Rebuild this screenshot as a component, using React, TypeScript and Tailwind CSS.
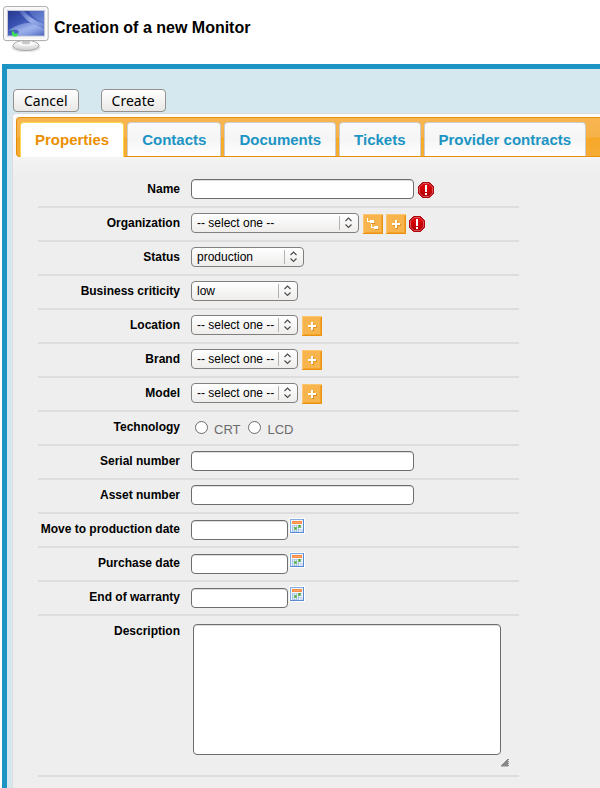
import React, { useState } from 'react';

const MonitorIcon: React.FC = () => (
  <svg className="w-12 h-12" viewBox="0 0 48 48" aria-hidden="true">
    <defs>
      <linearGradient id="screen" x1="0" y1="0" x2="1" y2="1">
        <stop offset="0" stopColor="#26388c" />
        <stop offset="0.35" stopColor="#3850b0" />
        <stop offset="0.7" stopColor="#5f7cd0" />
        <stop offset="1" stopColor="#3c55b0" />
      </linearGradient>
      <linearGradient id="beam" x1="0" y1="0" x2="1" y2="1">
        <stop offset="0" stopColor="#b4c6f6" stopOpacity="0.15" />
        <stop offset="0.5" stopColor="#b4c6f6" stopOpacity="0.75" />
        <stop offset="1" stopColor="#b4c6f6" stopOpacity="0.1" />
      </linearGradient>
      <linearGradient id="foot" x1="0" y1="0" x2="0" y2="1">
        <stop offset="0" stopColor="#ffffff" />
        <stop offset="1" stopColor="#d0d0d0" />
      </linearGradient>
    </defs>
    <ellipse cx="24" cy="43.500" rx="14.500" ry="5" fill="#e2e2e2" />
    <ellipse cx="24" cy="41.500" rx="13" ry="5" fill="url(#foot)" stroke="#a2a2a2" strokeWidth="0.9" />
    <ellipse cx="24" cy="39.500" rx="9" ry="2.400" fill="#fafafa" />
    <path d="M20 36h8v3.500c-2 1.200-6 1.200-8 0z" fill="#c9c9c9" />
    <rect x="1.600" y="2.600" width="44.500" height="34" rx="2.500" fill="#f6f6f6" stroke="#a8a8a8" />
    <rect x="2.800" y="3.800" width="42" height="31.600" rx="1.500" fill="none" stroke="#ffffff" />
    <rect x="5.500" y="6.500" width="37" height="25.500" fill="url(#screen)" stroke="#c3c7d8" />
    <path d="M17 7C22 14 29 21 42 26V20C33 17 26 12 22 7z" fill="url(#beam)" />
    <path d="M6 27C15 20 22 19 28 19L42 25V31.500H14C20 27 16 24 6 27z" fill="url(#beam)" />
    <path d="M27 7C31 13 36 17 42 18V7z" fill="#8ba2e2" opacity="0.3" />
    <path d="M10 27.500h2v2h3.500v1.500l-1 1.500h-3l-1-1.500H10z" fill="#36e84a" />
    <path d="M9.500 25.500h1.500v1H9.500z" fill="#36e84a" />
  </svg>
);

const RequiredIcon: React.FC = () => (
  <svg className="w-4 h-4 mt-[3px] shrink-0" viewBox="0 0 16 16" role="img" aria-label="Required">
    <defs>
      <linearGradient id="stop" x1="0" y1="0" x2="0" y2="1">
        <stop offset="0" stopColor="#e20a10" />
        <stop offset="0.55" stopColor="#cc0007" />
        <stop offset="1" stopColor="#a80006" />
      </linearGradient>
    </defs>
    <path d="M4.500.5h7l4 4v7l-4 4h-7l-4-4v-7z" fill="#b40008" stroke="#b0000a" />
    <path d="M5 1.500h6L14.500 5v6L11 14.500H5L1.500 11V5z" fill="url(#stop)" stroke="#dc6a6e" strokeWidth="0.8" />
    <path d="M7 3h2v7H7zM7 11h2v2H7z" fill="#ffffff" />
  </svg>
);

const CalendarIcon: React.FC = () => (
  <svg className="w-4 h-4 block" viewBox="0 0 16 16" shapeRendering="crispEdges" aria-hidden="true">
    <rect width="16" height="16" fill="#ffffff" />
    <rect x="1" y="1" width="14" height="14" fill="#5a8bcf" />
    <path d="M1 1h13v1H2v12H1z" fill="#82abe2" />
    <rect x="2" y="2" width="12" height="12" fill="#f2f7fe" />
    <rect x="3" y="3" width="10" height="3" fill="#ff8c45" />
    <rect x="4" y="4" width="8" height="1" fill="#ffa468" />
    <path d="M3 7h10v1H3zM3 9h10v1H3zM3 11h9v1H3zM3 13h7v1H3z" fill="#bdd2f1" />
    <path d="M3 7h1v7H3zM5 7h1v7H5zM7 7h1v7H7zM9 7h1v7H9z" fill="#a9c5eb" />
    <path d="M11 14v-2h1v-1h2v3z" fill="#cfdff5" />
    <rect x="9" y="7" width="3" height="3" fill="#7cc06c" />
    <rect x="5" y="9" width="3" height="3" fill="#7cc06c" />
    <path d="M10 7h1v2h-1zM6 10h1v1H6z" fill="#479f40" />
  </svg>
);

interface IconButtonProps {
  kind: 'tree' | 'plus';
  label: string;
}

const IconButton: React.FC<IconButtonProps> = ({ kind, label }) => (
  <button type="button" aria-label={label} className="mt-px shrink-0">
    <svg className="w-5 h-5 block" viewBox="0 0 20 20" shapeRendering="crispEdges" aria-hidden="true">
      <rect width="20" height="20" fill="#fcc670" />
      <path d="M1 19h18V1h1v19H0v-1z" fill="#e9930f" />
      <rect x="1" y="1" width="18" height="18" fill="#f9b54d" />
      <path d="M18 2h1v17H2v-1h16z" fill="#f2a32f" />
      {kind === 'plus' ? (
        <>
          <path d="M10 7h2v3h3v2h-3v3h-2v-3H7v-2h3z" fill="#df9125" />
          <path d="M9 6h2v3h3v2h-3v3H9v-3H6V9h3z" fill="#ffffff" />
        </>
      ) : (
        <>
          <path d="M8 9h4v1H8zM12 15h4v1h-4z" fill="#df9125" />
          <path d="M4 4h1v3h2V6h4v3H7V8H4zM8 10h1v3h2v-1h4v3h-4v-1H8z" fill="#ffffff" />
        </>
      )}
    </svg>
  </button>
);

interface SelectFieldProps {
  id: string;
  options: string[];
  width: string;
}

const SelectField: React.FC<SelectFieldProps> = ({ id, options, width }) => (
  <div className={`relative mr-px ${width}`}>
    <select
      id={id}
      className="appearance-none block w-full h-5 pl-[5px] pr-5 text-xs leading-4 text-black border border-[#82807d] rounded-[4px] bg-linear-to-b from-white to-[#eeedec]"
    >
      {options.map((option) => (
        <option key={option}>{option}</option>
      ))}
    </select>
    <svg className="absolute right-0 top-0 w-5 h-5 pointer-events-none" viewBox="0 0 20 20" aria-hidden="true">
      <path d="M.5 3v14" stroke="#b5b3b1" />
      <path d="M6.500 8l3-3 3 3M6.500 11.500l3 3 3-3" fill="none" stroke="#4a4a4a" strokeWidth="1.100" />
    </svg>
  </div>
);

interface RowProps {
  label: string;
  htmlFor?: string;
  children: React.ReactNode;
}

const Row: React.FC<RowProps> = ({ label, htmlFor, children }) => (
  <div
    role={htmlFor ? undefined : 'radiogroup'}
    aria-label={htmlFor ? undefined : label}
    className="grid grid-cols-[142px_1fr] gap-x-[11px] min-h-[34px] items-start border-b-2 border-[#dddddd]"
  >
    {htmlFor ? (
      <label htmlFor={htmlFor} className="pt-[7px] text-right text-xs font-bold whitespace-nowrap">{label}</label>
    ) : (
      <span className="pt-[7px] text-right text-xs font-bold whitespace-nowrap">{label}</span>
    )}
    <div className="flex items-start gap-[3px] pt-[5px]">{children}</div>
  </div>
);

const inputClass = 'block h-5 px-1 text-xs bg-white border border-[#6f6d6b] rounded-[4px] shadow-[inset_0_1px_0_#dddddd]';

const DateRow: React.FC<{ id: string; label: string }> = ({ id, label }) => (
  <Row label={label} htmlFor={id}>
    <div className="flex items-start gap-px -mt-px">
      <input id={id} type="text" className={`${inputClass} w-[97px] mt-0.5`} />
      <button type="button" aria-label={`Pick ${label}`}>
        <CalendarIcon />
      </button>
    </div>
  </Row>
);

const TABS = ['Properties', 'Contacts', 'Documents', 'Tickets', 'Provider contracts'];
const TECHNOLOGIES = ['CRT', 'LCD'];
const SELECT_ONE = '-- select one --';

const actionClass = "h-[23px] px-2.5 text-sm leading-5 font-['Noto_Sans',sans-serif] text-black border border-[#93908d] rounded-[4px] bg-linear-to-b from-white to-[#e9e8e7]";

export default function App() {
  const [activeTab, setActiveTab] = useState('Properties');
  const [technology, setTechnology] = useState('');

  return (
    <div className="min-h-screen flex flex-col bg-white text-black font-['Liberation_Sans',Arial,sans-serif]">
      {/* Header */}
      <header className="flex items-center h-16 pl-0.5 pb-2 gap-1">
        <MonitorIcon />
        <h1 className="text-base font-bold whitespace-nowrap">Creation of a new Monitor</h1>
      </header>

      <main className="grow flex flex-col ml-0.5 border-t-5 border-l-5 border-[#1c94c4] bg-[#d5e8ef] pt-5 pl-[5px]">
        {/* Actions */}
        <div className="flex gap-[22px] pl-px pb-px">
          <button type="button" className={actionClass}>Cancel</button>
          <button type="submit" form="monitor-form" className={actionClass}>Create</button>
        </div>

        <div className="grow pt-[3px] pl-[3px] pb-[11px] border-t border-l border-[#dddddd] rounded-tl-[4px] bg-[linear-gradient(#fcfcfc_0,#f5f5f5_40px,#eeeeee_60px)]">
          {/* Tabs */}
          <div
            role="tablist"
            className="flex h-10 gap-[3px] pt-1 pl-[3px] border-t border-l border-b border-[#e78f08] rounded-l-[4px] bg-[linear-gradient(#f8b551_0,#f6b248_50%,#f6a828_52%,#f6ac35_100%)]"
          >
            {TABS.map((tab) => (
              <button
                key={tab}
                type="button"
                role="tab"
                aria-selected={tab === activeTab}
                onClick={() => setActiveTab(tab)}
                className={`px-3.5 pt-px text-[15px] font-bold whitespace-nowrap rounded-t-[4px] border border-b-0 ${
                  tab === activeTab
                    ? '-mb-px border-[#fbd850] bg-white text-[#eb8f00]'
                    : 'border-[#cccccc] bg-linear-to-b from-[#fafafa] via-[#f5f5f5] to-white text-[#1c94c4]'
                }`}
              >
                {tab}
              </button>
            ))}
          </div>

          {/* Properties form */}
          <form id="monitor-form" onSubmit={(e) => e.preventDefault()} className="mt-[17px] ml-[22px] max-w-[481px]">
            <Row label="Name" htmlFor="name">
              <input id="name" type="text" required className={`${inputClass} w-[223px] mr-px`} />
              <RequiredIcon />
            </Row>
            <Row label="Organization" htmlFor="organization">
              <SelectField id="organization" options={[SELECT_ONE]} width="w-[168px]" />
              <IconButton kind="tree" label="Browse organizations" />
              <IconButton kind="plus" label="Add organization" />
              <RequiredIcon />
            </Row>
            <Row label="Status" htmlFor="status">
              <SelectField id="status" options={['production']} width="w-[113px]" />
            </Row>
            <Row label="Business criticity" htmlFor="criticity">
              <SelectField id="criticity" options={['low']} width="w-[107px]" />
            </Row>
            <Row label="Location" htmlFor="location">
              <SelectField id="location" options={[SELECT_ONE]} width="w-[107px]" />
              <IconButton kind="plus" label="Add location" />
            </Row>
            <Row label="Brand" htmlFor="brand">
              <SelectField id="brand" options={[SELECT_ONE]} width="w-[107px]" />
              <IconButton kind="plus" label="Add brand" />
            </Row>
            <Row label="Model" htmlFor="model">
              <SelectField id="model" options={[SELECT_ONE]} width="w-[107px]" />
              <IconButton kind="plus" label="Add model" />
            </Row>
            <Row label="Technology">
              <div className="flex gap-2 pl-1 pt-1">
                {TECHNOLOGIES.map((name) => (
                  <label key={name} className="flex items-start gap-1.5 text-[13px] leading-[18px] text-[#6b6b6b]">
                    <input
                      type="radio"
                      name="technology"
                      checked={technology === name}
                      onChange={() => setTechnology(name)}
                      className="appearance-none w-[13px] h-[13px] rounded-full border border-[#6f6d6b] bg-white checked:border-4"
                    />
                    {name}
                  </label>
                ))}
              </div>
            </Row>
            <Row label="Serial number" htmlFor="serial">
              <input id="serial" type="text" className={`${inputClass} w-[223px]`} />
            </Row>
            <Row label="Asset number" htmlFor="asset">
              <input id="asset" type="text" className={`${inputClass} w-[223px]`} />
            </Row>
            <DateRow id="production-date" label="Move to production date" />
            <DateRow id="purchase-date" label="Purchase date" />
            <DateRow id="warranty-end" label="End of warranty" />
            <Row label="Description" htmlFor="description">
              <div className="flex items-end pl-0.5 pt-[3px] pb-2">
                <textarea
                  id="description"
                  className="block w-[308px] h-[131px] mb-3 p-1 text-xs resize-none bg-white border border-[#6f6d6b] rounded-[4px] shadow-[inset_0_1px_0_#dddddd]"
                />
                <svg className="w-2 h-2" viewBox="0 0 8 8" aria-hidden="true">
                  <path d="M0 7.500L7.500 0M2 7.500L7.500 2M4 7.500L7.500 4M6 7.500L7.500 6" stroke="#222222" strokeWidth="1" />
                </svg>
              </div>
            </Row>
          </form>
        </div>
      </main>
    </div>
  );
}
